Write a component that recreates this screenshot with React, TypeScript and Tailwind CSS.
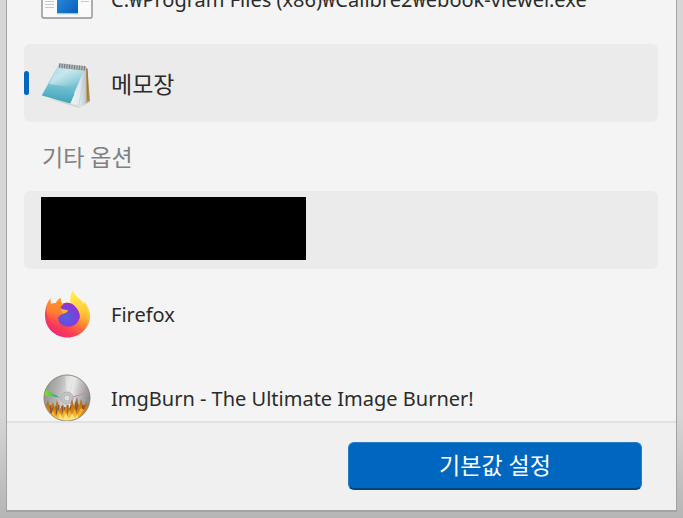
import type { ReactNode } from 'react';

function ViewerIcon() {
  return (
    <svg viewBox="0 0 52 52" className="h-[52px] w-[52px]" aria-hidden="true">
      <defs>
        <linearGradient id="viewer-blue" x1="0" y1="0" x2="1" y2="1">
          <stop offset="0" stopColor="#2f8fe0" />
          <stop offset="1" stopColor="#0560b8" />
        </linearGradient>
      </defs>
      <rect x="1" y="6" width="50" height="39" rx="1.5" fill="#fafafa" stroke="#8f8f8f" strokeWidth="1.4" />
      <path d="M4 28.500h9M4 31.500h9M4 34.500h9M40 28.500h8" stroke="#c8c8c8" strokeWidth="1" />
      <rect x="16" y="18" width="21" height="22.500" fill="url(#viewer-blue)" />
      <path d="M16 41h21" stroke="#b8dcf6" strokeWidth="1" />
    </svg>
  );
}

function NotepadIcon() {
  return (
    <svg viewBox="0 0 52 52" className="h-[52px] w-[52px]" aria-hidden="true">
      <defs>
        <linearGradient id="pad-cover" x1="0.6" y1="0" x2="0.5" y2="1">
          <stop offset="0" stopColor="#a3d6df" />
          <stop offset="0.45" stopColor="#84c9d6" />
          <stop offset="1" stopColor="#3ba6ba" />
        </linearGradient>
        <linearGradient id="pad-shine" x1="0" y1="0" x2="1" y2="1">
          <stop offset="0" stopColor="#ffffff" stopOpacity="0.1" />
          <stop offset="0.4" stopColor="#ffffff" stopOpacity="0.5" />
          <stop offset="0.8" stopColor="#ffffff" stopOpacity="0" />
        </linearGradient>
        <linearGradient id="pad-pages" x1="0" y1="0" x2="1" y2="0">
          <stop offset="0" stopColor="#eef4f6" />
          <stop offset="0.6" stopColor="#dfe8eb" />
          <stop offset="1" stopColor="#b5c4c9" />
        </linearGradient>
      </defs>
      <path d="M9 42l29 9 11-6-6-3z" fill="#8d8d8d" opacity="0.28" />
      <path d="M44 10l2.500 1.500L49 44l-5 2.500z" fill="#b89152" />
      <path d="M46 12l1 31" stroke="#8a6a30" strokeWidth="0.7" />
      <path d="M43 11l2 1 .5 33-4 4-12-2.500z" fill="url(#pad-pages)" />
      <path d="M44 14l-6 34" stroke="#b9c9ce" strokeWidth="0.6" />
      <path d="M11 41.500l19 5 9 3 3-1.500" fill="none" stroke="#dde4e6" strokeWidth="1.200" />
      <path d="M18 7l26 4-15 35L1 38z" fill="url(#pad-cover)" />
      <path d="M18 7l26 4-9 20L8 27z" fill="url(#pad-shine)" />
      <path d="M1 38L29 46l4-9" fill="none" stroke="#3b98aa" strokeWidth="0.7" />
      <path d="M18 8.500l27 3" stroke="#b4babb" strokeWidth="4.500" />
      <path d="M18 8.500l27 3" stroke="#757f82" strokeWidth="4.500" strokeDasharray="1.100 1.400" />
    </svg>
  );
}

function FirefoxIcon() {
  return (
    <svg viewBox="0 0 52 52" className="h-[52px] w-[52px]" aria-hidden="true">
      <defs>
        <linearGradient id="fox-body" x1="0.85" y1="0.1" x2="0.25" y2="0.95">
          <stop offset="0" stopColor="#ffe94a" />
          <stop offset="0.28" stopColor="#ffc235" />
          <stop offset="0.52" stopColor="#ff7d36" />
          <stop offset="0.76" stopColor="#fb4250" />
          <stop offset="1" stopColor="#ee2a78" />
        </linearGradient>
        <radialGradient id="fox-globe" cx="0.4" cy="0.6" r="0.65">
          <stop offset="0" stopColor="#5560dd" />
          <stop offset="0.55" stopColor="#7046dd" />
          <stop offset="1" stopColor="#9a30d3" />
        </radialGradient>
        <linearGradient id="fox-flame" x1="0.4" y1="0" x2="0.6" y2="1">
          <stop offset="0" stopColor="#fff04f" />
          <stop offset="0.6" stopColor="#ffcb38" />
          <stop offset="1" stopColor="#ffa033" stopOpacity="0" />
        </linearGradient>
        <linearGradient id="fox-head" x1="0.5" y1="0" x2="0.3" y2="1">
          <stop offset="0" stopColor="#ff9a2b" />
          <stop offset="0.5" stopColor="#ff7d33" />
          <stop offset="1" stopColor="#ff5044" stopOpacity="0" />
        </linearGradient>
      </defs>
      <path
        d="M9.500 10.500c-.5 2 0 4 .8 5.500 1.500-.8 3-1 4.700-.7.8-2.500 2.500-4.300 4.500-5.300 0 2.500.8 4.600 2 6 3-1.500 6-2 8.500-1-1-4-.5-8.500 2-12 1.500 5 6 7 9 11 .8 1 1.500 1.500 2 1.500l0-2c3.500 4 6 9 6 14.500C49 40 39 49.500 26.500 49.500S4 40 4 27.500c0-6.500 1.500-12.500 5.500-17z"
        fill="url(#fox-body)"
      />
      <circle cx="27.500" cy="27" r="11.500" fill="url(#fox-globe)" />
      <path d="M30 15c-1-4-.5-8.500 2-12 1.500 5 6 7 9 11 6 8 5 18-2 24 1-7 1-17-9-23z" fill="url(#fox-flame)" />
      <path d="M21.500 16c4-2.500 10-1 12.500 3-2-1-3.500-1-5-.5-3 0-6-1-7.500-2.500z" fill="#9634cf" />
      <path
        d="M9.500 10.500c-.5 2 0 4 .8 5.500 1.500-.8 3-1 4.700-.7.8-2.500 2.500-4.300 4.500-5.300 0 2.500.8 4.600 2 6l-2 4c2 1.500 5 2 7.500 2-.5 3-4 3.500-6.500 4.500-2.500 1-3.500 3-3 5.500-1 3 1 6 3 7C9 38 5 28 5.500 20c.5-4 2-7 4-9.500z"
        fill="url(#fox-head)"
      />
      <path d="M19.500 20.500c2 1.500 5 1.500 7.500 1.500-.5 2.500-3 3-5 3.500-1.500-2-2-3-2.500-5z" fill="#ffad38" />
    </svg>
  );
}

function ImgBurnIcon() {
  return (
    <svg viewBox="0 0 52 52" className="h-[52px] w-[52px]" aria-hidden="true">
      <defs>
        <linearGradient id="disc-metal" x1="0" y1="0.3" x2="1" y2="0.5">
          <stop offset="0" stopColor="#929292" />
          <stop offset="0.3" stopColor="#b5b5b5" />
          <stop offset="0.6" stopColor="#e9e9e9" />
          <stop offset="0.78" stopColor="#b9b9b9" />
          <stop offset="1" stopColor="#888888" />
        </linearGradient>
        <linearGradient id="disc-fire" x1="0" y1="0" x2="0" y2="1">
          <stop offset="0" stopColor="#93683f" />
          <stop offset="0.3" stopColor="#cf7618" />
          <stop offset="0.65" stopColor="#f79a16" />
          <stop offset="1" stopColor="#ffdc70" />
        </linearGradient>
        <linearGradient id="disc-green" x1="0" y1="0" x2="1" y2="0">
          <stop offset="0" stopColor="#8cf000" />
          <stop offset="0.5" stopColor="#55c747" />
          <stop offset="1" stopColor="#278caf" />
        </linearGradient>
        <clipPath id="disc-edge">
          <circle cx="26" cy="26" r="22.500" />
        </clipPath>
      </defs>
      <circle cx="26" cy="26" r="23" fill="url(#disc-metal)" stroke="#8a8a8a" strokeWidth="0.6" />
      <g clipPath="url(#disc-edge)">
        <path d="M26 26L24 2l9 0z" fill="#fff" opacity="0.35" />
        <path d="M19 25.500L2 16v7z" fill="url(#disc-green)" />
        <path d="M32 25l17-5" stroke="#be8aab" strokeWidth="1" />
        <circle cx="26" cy="26" r="6" fill="#c4c4c4" stroke="#a8a8a8" strokeWidth="0.8" />
        <circle cx="26" cy="26" r="3" fill="#dedede" stroke="#aaa" strokeWidth="0.7" />
        <path
          d="M2 50V26l3 7 2-5 2 8 3-6 2 6 2-8 3 9 3-5 2 6 2-6 2 6 3-11 2 7 3-9 2 10 2-8 3 8 2-6 2 5 4-6v30z"
          fill="url(#disc-fire)"
        />
        <path
          d="M9 33l1 8 2-6M15 34l1 9 2-10M21 34l1 9 2-8M27 33v10l3-9M35 30l-1 13 3-11M42 33l-1 7 3-7"
          fill="none"
          stroke="#805a30"
          strokeWidth="1.300"
        />
        <path
          d="M6 38l4 6 2-6 3 9 2-10 3 9 3-9 3 8 2-8 3 8 3-9 2 8 4-8 3 2-8 10H14z"
          fill="#ffbe2e"
          opacity="0.85"
        />
        <path d="M14 43l3 4 2-6 3 6 3-6 3 6 3-6 3 5 3-4v7H15z" fill="#ffef9c" opacity="0.8" />
      </g>
      <circle cx="26" cy="26" r="23" fill="none" stroke="#8c7650" strokeWidth="0.5" />
    </svg>
  );
}

type AppOptionProps = {
  icon: ReactNode;
  name: string;
  korean?: boolean;
  selected?: boolean;
};

function AppOption({ icon, name, korean = false, selected = false }: AppOptionProps) {
  return (
    <button
      type="button"
      aria-pressed={selected}
      className={`flex h-[78px] w-full shrink-0 items-center rounded-md text-left text-[#2b2b2b] ${
        selected ? 'bg-[#ebebeb]' : ''
      }`}
    >
      <span className={`h-6 w-[5px] rounded-full ${selected ? 'bg-[#0067c0]' : ''}`} />
      <span className="ml-3">{icon}</span>
      <span className={`ml-[18px] whitespace-nowrap pt-0.5 ${korean ? 'text-[23px]' : 'text-[20px]'}`}>{name}</span>
    </button>
  );
}

export default function App() {
  return (
    <div className="flex h-screen flex-col bg-linear-to-b from-[#d6d6d6] from-80% to-[#b5b5b5] px-1.5 pb-1.5 font-['Noto_Sans','Noto_Sans_CJK_KR',sans-serif]">
      <main className="flex min-h-0 flex-1 flex-col border-x border-b-2 border-[#a3a3a3] bg-[#f4f4f4]">
        <section className="flex min-h-0 flex-1 flex-col overflow-hidden pr-[18px] pl-[17px]">
          <div className="-mt-10 flex flex-col gap-1.5">
            <AppOption icon={<ViewerIcon />} name="C:₩Program Files (x86)₩Calibre2₩ebook-viewer.exe" />
            <AppOption icon={<NotepadIcon />} name="메모장" korean selected />
          </div>
          <h2 className="flex h-[69px] shrink-0 items-center pt-0.5 pl-[18px] text-[23px] text-[#808080]">
            기타 옵션
          </h2>
          <div className="flex flex-col gap-1.5">
            <button
              type="button"
              aria-label="앱"
              className="flex h-[78px] w-full shrink-0 items-start rounded-md bg-[#ebebeb] px-[17px] pt-1.5"
            >
              <span className="h-[63px] w-[265px] bg-black" />
            </button>
            <AppOption icon={<FirefoxIcon />} name="Firefox" />
            <AppOption icon={<ImgBurnIcon />} name="ImgBurn - The Ultimate Image Burner!" />
          </div>
        </section>
        <footer className="flex shrink-0 justify-end border-t-2 border-[#e2e2e2] bg-[#f0f0f0] pt-[19px] pr-[34px] pb-5">
          <button
            type="button"
            className="h-12 w-[294px] rounded-md border border-b-2 border-[#2a7cc6] border-b-[#00457f] bg-[#0067c0] text-[23px] text-white"
          >
            기본값 설정
          </button>
        </footer>
      </main>
    </div>
  );
}
